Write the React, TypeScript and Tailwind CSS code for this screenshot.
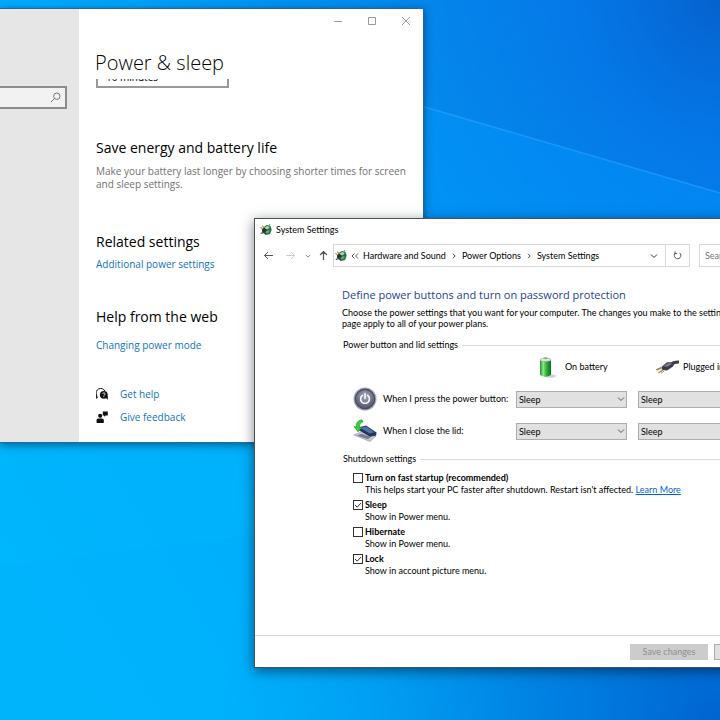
import { useState } from "react";
import type { ReactNode } from "react";

const ACTIONS = ["Sleep", "Do nothing", "Hibernate", "Shut down"];

const Wallpaper = () => (
  <svg
    className="absolute inset-0 h-full w-full"
    viewBox="0 0 720 720"
    preserveAspectRatio="none"
    aria-hidden="true"
  >
    <defs>
      <linearGradient id="sky" x1="0" y1="0.8" x2="1" y2="0.2">
        <stop offset="0" stopColor="#00b4fc" />
        <stop offset="0.3" stopColor="#00aefc" />
        <stop offset="0.7" stopColor="#0094f6" />
        <stop offset="1" stopColor="#0084fc" />
      </linearGradient>
      <radialGradient id="topRight" cx="1" cy="0" r="0.8">
        <stop offset="0" stopColor="#0562ce" />
        <stop offset="0.25" stopColor="#086eda" stopOpacity="0.6" />
        <stop offset="0.6" stopColor="#0a7cdc" stopOpacity="0.35" />
        <stop offset="1" stopColor="#0a80dc" stopOpacity="0" />
      </radialGradient>
      <radialGradient id="bottomRight" cx="1" cy="1" r="0.7">
        <stop offset="0" stopColor="#0064d0" />
        <stop offset="0.4" stopColor="#0078dc" stopOpacity="0.7" />
        <stop offset="1" stopColor="#0094ea" stopOpacity="0" />
      </radialGradient>
    </defs>
    <rect width="720" height="720" fill="url(#sky)" />
    <rect width="720" height="720" fill="url(#topRight)" />
    <rect width="720" height="720" fill="url(#bottomRight)" />
    <path d="M380 94 720 193V330H380Z" fill="#0098ff" fillOpacity="0.4" />
    <path d="M380 94 720 193" stroke="#2ba4ff" strokeOpacity="0.6" strokeWidth="1.5" />
    <path d="M0 566 260 534V440H0Z" fill="#00bcff" fillOpacity="0.2" />
  </svg>
);

const PowerIcon = () => (
  <svg className="size-3 shrink-0" viewBox="0 0 16 16" aria-hidden="true">
    <path d="M4 4.5 9 1.2l5 1.3 1.6 5.3-2.2 5.4-5.4 1.6-4.4-3Z" fill="#2f6b45" />
    <path d="m6 4.4 3.6-1.6 3.4 1-2 2.8-4 .8Z" fill="#9fd8a8" />
    <path d="m7 9.5 6-1.4-1.4 3.6-3.8 1Z" fill="#5cb377" />
    <path d="M.6 4.2 4.6 8M2.8 2.2l3.6 3.6" stroke="#a68a4c" strokeWidth="1.4" />
    <path d="M2.6 7.4 6.4 5l2.8 3.6-2.6 2.8-3.6-.6Z" fill="#26352d" />
    <path d="M1 12.6 5.6 11l2.4 2.6" stroke="#34483c" strokeWidth="1.6" fill="none" />
    <path d="m11.6 2.2 2-1.6" stroke="#394" strokeWidth="1.4" />
  </svg>
);

const Chevron = ({ className }: { className: string }) => (
  <svg className={className} viewBox="0 0 8 8" fill="none" stroke="currentColor" aria-hidden="true">
    <path d="m1 2.5 3 3 3-3" />
  </svg>
);

const Crumb = ({ children }: { children: ReactNode }) => (
  <a href="#" className="whitespace-nowrap text-black">
    {children}
  </a>
);

const CrumbArrow = () => (
  <svg className="mx-[5px] size-1.5 shrink-0" viewBox="0 0 6 6" fill="none" stroke="#444" aria-hidden="true">
    <path d="m2 .8 2.2 2.2L2 5.2" />
  </svg>
);

const SettingsWindow = () => (
  <section className="absolute top-2 left-0 flex w-[424px] border border-l-0 border-[#1c6ba8] bg-white shadow-[0_2px_8px_rgba(0,0,0,0.45)]">
    <aside className="w-[79px] shrink-0 bg-[#e6e6e6] pt-[77px] pr-3">
      <label className="flex h-[23px] items-center border-2 border-l-0 border-[#8c8c8c] bg-[#f2f2f2]">
        <input type="search" aria-label="Find a setting" className="w-full min-w-0 outline-none" />
        <svg className="mr-1 size-[11px] shrink-0" viewBox="0 0 11 11" fill="none" stroke="#777" aria-hidden="true">
          <circle cx="6.8" cy="4.2" r="3.2" />
          <path d="M4.4 6.6.8 10.2" />
        </svg>
      </label>
    </aside>

    <div className="min-w-0 flex-1">
      <div className="flex h-6 justify-end text-[#999999]">
        <button type="button" aria-label="Minimize" className="flex w-[34px] items-center justify-center">
          <svg className="size-2" viewBox="0 0 8 8" stroke="currentColor">
            <path d="M0 4.5h8" />
          </svg>
        </button>
        <button type="button" aria-label="Maximize" className="flex w-[34px] items-center justify-center">
          <svg className="size-2" viewBox="0 0 8 8" fill="none" stroke="currentColor">
            <path d="M.5.5h7v7h-7z" />
          </svg>
        </button>
        <button type="button" aria-label="Close" className="flex w-[34px] items-center justify-center">
          <svg className="size-2" viewBox="0 0 8 8" stroke="currentColor">
            <path d="m0 0 8 8M8 0 0 8" />
          </svg>
        </button>
      </div>

      <h1 className="px-4 pt-3.5 text-[20px] leading-8 font-light text-black">Power &amp; sleep</h1>
      <div className="px-[17px] pb-[17px]">
        <div className="flex h-[9px] items-end overflow-hidden">
          <select
            aria-label="Sleep after"
            className="h-6 w-[133px] shrink-0 appearance-none border-2 border-[#999] px-2 pt-px text-[10px] leading-4 text-black"
          >
            <option>10 minutes</option>
          </select>
        </div>

        <h2 className="mt-12 text-[14px] leading-6 text-black">Save energy and battery life</h2>
        <p className="mt-[5px] text-[10px] leading-[13px] text-[#707070]">
          Make your battery last longer by choosing shorter times for screen and sleep settings.
        </p>

        <h2 className="mt-[39px] text-[14px] leading-6 text-black">Related settings</h2>
        <a href="#" className="mt-0.5 block text-[10px] leading-4 text-[#1173bb]">
          Additional power settings
        </a>

        <h2 className="mt-[33px] text-[14px] leading-6 text-black">Help from the web</h2>
        <a href="#" className="mt-2 block text-[10px] leading-4 text-[#1173bb]">
          Changing power mode
        </a>

        <div className="mt-[33px] space-y-[7px] text-[10px] leading-4 text-[#1173bb]">
          <a href="#" className="flex items-center gap-3">
            <svg className="size-3" viewBox="0 0 12 12" aria-hidden="true">
              <path d="M1.6 8.6.6 10.4V7A4.300 4.300 0 1 1 8.800 3" fill="none" stroke="#111" />
              <circle cx="7.800" cy="6.800" r="3.900" fill="#111" />
              <path d="m9.400 9.600 2.400 2.200V7.600Z" fill="#111" />
              <path d="M6.800 5.900a1.100 1.100 0 1 1 1.700.9q-.7.4-.7.9M7.800 8.300v.8" fill="none" stroke="#fff" strokeWidth=".9" />
            </svg>
            Get help
          </a>
          <a href="#" className="flex items-center gap-3">
            <svg className="size-3" viewBox="0 0 12 12" fill="#111" aria-hidden="true">
              <circle cx="4.2" cy="4.8" r="2.1" />
              <path d="M.6 12V9.2q0-1.700 1.700-1.700h3.800q1.700 0 1.700 1.700V12Z" />
              <path d="M6.800.4h5v4H9.600L8 5.800V4.400H6.800Z" />
            </svg>
            Give feedback
          </a>
        </div>
      </div>
    </div>
  </section>
);

const BatteryIcon = () => (
  <svg className="h-6 w-5" viewBox="0 0 20 24" aria-hidden="true">
    <defs>
      <linearGradient id="cell" x1="0" x2="1">
        <stop offset="0" stopColor="#1d9a2b" />
        <stop offset="0.3" stopColor="#8be88a" />
        <stop offset="0.55" stopColor="#35b83e" />
        <stop offset="1" stopColor="#0d6e1d" />
      </linearGradient>
    </defs>
    <ellipse cx="13" cy="21" rx="6" ry="1.8" fill="#d2d2d2" />
    <path d="M6.5 2.5h4V4h-4z" fill="#b6bcb8" />
    <path d="M3 4.5Q8.500 1.500 14 4.500V20Q8.500 23.500 3 20Z" fill="url(#cell)" />
    <ellipse cx="8.500" cy="4.700" rx="5.500" ry="1.700" fill="#dfe9e0" stroke="#8fa193" strokeWidth=".5" />
    <ellipse cx="8.500" cy="3.200" rx="2" ry="1" fill="#9da9a0" />
  </svg>
);

const PlugIcon = () => (
  <svg className="h-4 w-6" viewBox="0 0 24 16" aria-hidden="true">
    <path d="M15 6Q18 3 24 3" stroke="#3c3c4a" strokeWidth="3" fill="none" />
    <path d="m6.500 8 5.500-4.800 8 .2-2 4.200-6 4-5-.6Z" fill="#3c3c4a" />
    <path d="m8.500 7.400 4.500-3.200 4.500.2-5 3.200Z" fill="#80809a" />
    <path d="m6.500 8.700-5 2.400M8 11l-4.600 2.800" stroke="#b79a5c" strokeWidth="1.600" />
    <path d="m6.500 8.400-5.500 2.300M9 12 6 14.500" stroke="#777" strokeWidth=".8" />
  </svg>
);

const PowerButtonIcon = () => (
  <svg className="size-6 shrink-0" viewBox="0 0 24 24" aria-hidden="true">
    <defs>
      <radialGradient id="knob" cx="0.5" cy="0.35" r="0.65">
        <stop offset="0" stopColor="#a5a8bc" />
        <stop offset="1" stopColor="#55576f" />
      </radialGradient>
    </defs>
    <circle cx="12" cy="12" r="11.500" fill="#a9abb9" />
    <circle cx="12" cy="12" r="10.400" fill="#4a4c64" />
    <circle cx="12" cy="12" r="9" fill="url(#knob)" />
    <path d="M9.400 8.400a4.400 4.400 0 1 0 5.200 0M12 6.500v5" fill="none" stroke="#fff" strokeWidth="1.500" strokeLinecap="round" />
  </svg>
);

const LidIcon = () => (
  <svg className="size-6 shrink-0" viewBox="0 0 24 24" aria-hidden="true">
    <path d="m1 16 8-3.500 14 4.500-6 5.500Z" fill="#c9ccd4" stroke="#8b8f9c" strokeWidth=".6" />
    <path d="m4 16.500 4.500-1.800 9.500 3.200-3 2.400Z" fill="#777c8c" />
    <path d="m5 8.500 8-2 10.500 7-.4 3-6 1.300L5.400 11Z" fill="#23345f" />
    <path d="m7 8.800 6-1.400 8.500 5.800-4.700 1.400Z" fill="#4e74ae" />
    <path d="M9 .8Q2.200 2 3.400 8L1 7.400 5 12.800 9 8.400 6.600 8.200Q6 4.200 10 2.800Z" fill="#36cf36" stroke="#14891d" strokeWidth=".6" />
  </svg>
);

const ActionSelect = ({ label }: { label: string }) => (
  <div className="relative w-[111px]">
    <select
      aria-label={label}
      className="block h-[17px] w-full appearance-none border border-[#adadad] bg-[#e1e1e1] px-0.5 text-[9px] leading-[15px] text-black"
    >
      {ACTIONS.map((action) => (
        <option key={action}>{action}</option>
      ))}
    </select>
    <Chevron className="pointer-events-none absolute top-1 right-0.5 size-2 text-[#555]" />
  </div>
);

const GroupTitle = ({ children }: { children: ReactNode }) => (
  <h3 className="flex items-center gap-1 pl-px text-[9px] leading-3 whitespace-nowrap text-black">
    {children}
    <span className="h-px flex-1 bg-[#dcdcdc]" />
  </h3>
);

const shutdownOptions = [
  {
    id: "fast-startup",
    title: "Turn on fast startup (recommended)",
    text: "This helps start your PC faster after shutdown. Restart isn't affected.",
    link: "Learn More",
    checked: false,
  },
  { id: "sleep", title: "Sleep", text: "Show in Power menu.", checked: true },
  { id: "hibernate", title: "Hibernate", text: "Show in Power menu.", checked: false },
  { id: "lock", title: "Lock", text: "Show in account picture menu.", checked: true },
];

const ShutdownSettings = () => {
  const [options, setOptions] = useState(shutdownOptions);

  const toggle = (id: string) => {
    setOptions(options.map((o) => (o.id === id ? { ...o, checked: !o.checked } : o)));
  };

  return (
    <ul className="mt-[7px] space-y-[3px] pl-[11px] text-[9px] leading-3 text-black">
      {options.map((option) => (
        <li key={option.id}>
          <label className="flex items-center gap-0.5 font-bold">
            <span className="relative size-2.5 shrink-0">
              <input
                type="checkbox"
                checked={option.checked}
                onChange={() => toggle(option.id)}
                className="block size-2.5 appearance-none border border-[#333] bg-white"
              />
              {option.checked && (
                <svg className="pointer-events-none absolute inset-0" viewBox="0 0 10 10" fill="none" stroke="#333">
                  <path d="m2 5 2.200 2.200L8 3" />
                </svg>
              )}
            </span>
            {option.title}
          </label>
          <p className="pl-3">
            {option.text}{" "}
            {option.link && (
              <a href="#" className="text-[#0066cc] underline">
                {option.link}
              </a>
            )}
          </p>
        </li>
      ))}
    </ul>
  );
};

const ControlPanelWindow = () => (
  <section className="absolute top-[218px] -right-24 left-[254px] border border-[#44525e] bg-white font-['Lato','Open_Sans',sans-serif] shadow-[0_3px_12px_rgba(0,0,0,0.5)]">
    <div className="flex h-[22px] items-center gap-1 px-[5px] text-[9px] text-black">
      <PowerIcon />
      <span>System Settings</span>
    </div>

    <nav className="mt-[3px] flex h-[23px] items-center text-[9px] text-black">
      <button type="button" aria-label="Back" className="ml-2 flex w-[22px] shrink-0">
        <svg className="size-[11px]" viewBox="0 0 11 11" fill="none" stroke="#555">
          <path d="M10 5.500H1.500M5 2 1.500 5.500 5 9" />
        </svg>
      </button>
      <button type="button" aria-label="Forward" className="flex w-5 shrink-0">
        <svg className="size-[11px]" viewBox="0 0 11 11" fill="none" stroke="#ccc">
          <path d="M1 5.500h8.500M6 2l3.500 3.500L6 9" />
        </svg>
      </button>
      <button type="button" aria-label="Recent locations" className="flex w-[13px] shrink-0">
        <Chevron className="size-1.5 text-[#666]" />
      </button>
      <button type="button" aria-label="Up" className="flex w-[15px] shrink-0">
        <svg className="size-[11px]" viewBox="0 0 11 11" fill="none" stroke="#555" strokeWidth="1.200">
          <path d="M5.500 10V1.500M2 5l3.500-3.500L9 5" />
        </svg>
      </button>
      <div className="flex h-full w-[357px] shrink-0 items-center border border-[#d9d9d9] pl-px">
        <PowerIcon />
        <svg className="mx-1 size-2 shrink-0" viewBox="0 0 8 8" fill="none" stroke="#555" aria-hidden="true">
          <path d="M3.500 1.500 1 4l2.500 2.500M7 1.500 4.500 4 7 6.500" />
        </svg>
        <Crumb>Hardware and Sound</Crumb>
        <CrumbArrow />
        <Crumb>Power Options</Crumb>
        <CrumbArrow />
        <Crumb>System Settings</Crumb>
        <button type="button" aria-label="Previous locations" className="mr-[7px] ml-auto">
          <Chevron className="size-2 text-[#333]" />
        </button>
        <button
          type="button"
          aria-label="Refresh"
          className="flex h-full w-6 items-center justify-center border-l border-[#d9d9d9]"
        >
          <svg className="size-[9px]" viewBox="0 0 9 9" fill="none" stroke="#555">
            <path d="M6.500 1.800A3.300 3.300 0 1 1 2.500 1.900M2 .4v2.200h2.200" />
          </svg>
        </button>
      </div>
      <input
        type="search"
        aria-label="Search Control Panel"
        placeholder="Search Control Panel"
        className="mr-3 ml-[9px] h-full min-w-0 flex-1 border border-[#d9d9d9] px-[5px] placeholder:text-[#777]"
      />
    </nav>

    <main className="pt-5 pr-11 pb-[58px] pl-[87px]">
      <h2 className="font-['Open_Sans',sans-serif] text-[11px] leading-4 text-[#1f3f8f]">
        Define power buttons and turn on password protection
      </h2>
      <p className="mt-1 text-[9px] leading-[11px] text-black">
        Choose the power settings that you want for your computer. The changes you make to the settings on this
        <br />
        page apply to all of your power plans.
      </p>

      <div className="mt-[10px]">
        <GroupTitle>Power button and lid settings</GroupTitle>
        <div className="mt-1 grid grid-cols-[152px_111px_111px] items-center gap-x-[11px] gap-y-2 pl-[11px] text-[9px] whitespace-nowrap text-black">
          <div className="col-start-2 flex items-center gap-2 pl-[21px]">
            <BatteryIcon />
            On battery
          </div>
          <div className="flex items-center gap-1 pl-[17px]">
            <PlugIcon />
            Plugged in
          </div>
          <div className="flex items-center gap-1.5">
            <PowerButtonIcon />
            When I press the power button:
          </div>
          <ActionSelect label="Power button, on battery" />
          <ActionSelect label="Power button, plugged in" />
          <div className="flex items-center gap-1.5">
            <LidIcon />
            When I close the lid:
          </div>
          <ActionSelect label="Lid, on battery" />
          <ActionSelect label="Lid, plugged in" />
        </div>
      </div>

      <div className="mt-[10px]">
        <GroupTitle>Shutdown settings</GroupTitle>
        <ShutdownSettings />
      </div>
    </main>

    <footer className="flex h-8 items-center justify-end gap-1.5 border-t border-[#d9d9d9] pr-[23px] text-[9px]">
      <button type="button" disabled className="h-4 w-[78px] bg-[#cccccc] text-[#8f8f8f]">
        Save changes
      </button>
      <button type="button" className="h-4 w-[78px] border border-[#adadad] bg-[#e1e1e1] text-black">
        Cancel
      </button>
    </footer>
  </section>
);

const App = () => {
  return (
    <div className="relative min-h-screen overflow-hidden bg-[#00a2f8] font-['Open_Sans','Noto_Sans',sans-serif]">
      <Wallpaper />
      <SettingsWindow />
      <ControlPanelWindow />
    </div>
  );
};

export default App;
